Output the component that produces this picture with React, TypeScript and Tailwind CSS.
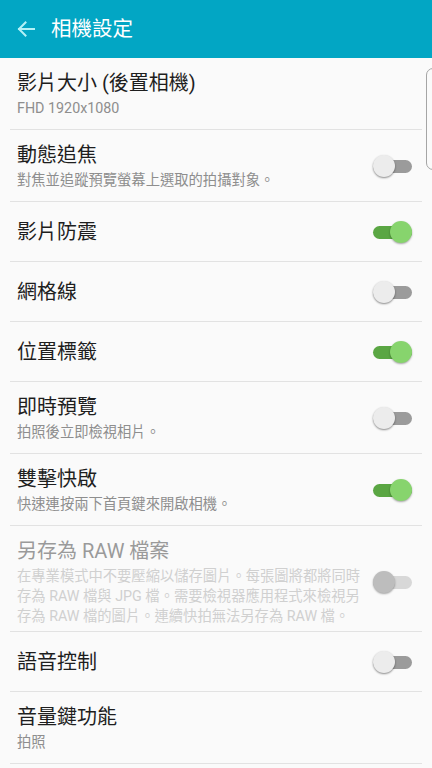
import React from "react";

type Mode = "off" | "on" | "disabled";

function Toggle({ mode }: { mode: Mode }) {
  const track =
    mode === "on" ? "bg-[#5aa643]" : mode === "off" ? "bg-[#9b9b9b]" : "bg-[#d8d8d8]";
  const thumb =
    mode === "on"
      ? "right-0 bg-[#87d46d] shadow-[0_1px_2px_rgba(0,0,0,0.35)]"
      : mode === "off"
      ? "left-0 bg-[#ececec] shadow-[0_1px_2px_rgba(0,0,0,0.45)]"
      : "left-0 bg-[#bdbdbd] shadow-[0_1px_2px_rgba(0,0,0,0.35)]";
  return (
    <div className="relative w-[39px] h-[22px] shrink-0">
      <div className={`absolute left-0 right-0 top-[5px] h-[13px] rounded-full ${track}`} />
      <div className={`absolute top-0 w-[22px] h-[22px] rounded-full ${thumb}`} />
    </div>
  );
}

type Item = {
  title: string;
  sub?: string[];
  toggle?: Mode;
  disabled?: boolean;
};

const items: Item[] = [
  { title: "影片大小 (後置相機)", sub: ["FHD 1920x1080"] },
  { title: "動態追焦", sub: ["對焦並追蹤預覽螢幕上選取的拍攝對象。"], toggle: "off" },
  { title: "影片防震", toggle: "on" },
  { title: "網格線", toggle: "off" },
  { title: "位置標籤", toggle: "on" },
  { title: "即時預覽", sub: ["拍照後立即檢視相片。"], toggle: "off" },
  { title: "雙擊快啟", sub: ["快速連按兩下首頁鍵來開啟相機。"], toggle: "on" },
  {
    title: "另存為 RAW 檔案",
    sub: [
      "在專業模式中不要壓縮以儲存圖片。每張圖將都將同時",
      "存為 RAW 檔與 JPG 檔。需要檢視器應用程式來檢視另",
      "存為 RAW 檔的圖片。連續快拍無法另存為 RAW 檔。",
    ],
    toggle: "disabled",
    disabled: true,
  },
  { title: "語音控制", toggle: "off" },
  { title: "音量鍵功能", sub: ["拍照"] },
];

function Row({ item }: { item: Item }) {
  const hasSub = !!item.sub;
  const raw = item.sub && item.sub.length > 1;
  return (
    <div>
      <div
        className={`flex items-center pl-[17px] pr-[20px] ${
          hasSub ? (raw ? "pt-[12px] pb-[5px]" : "pt-[12px] pb-[11px]") : "h-[59px]"
        }`}
      >
        <div className="flex-1 min-w-0">
          <div
            className={`text-[20px] leading-[26px] whitespace-nowrap ${
              item.disabled ? "text-[#9a9a9a]" : "text-[#1e1e1e]"
            }`}
          >
            {item.title}
          </div>
          {item.sub && (
            <div className="mt-[2px]">
              {item.sub.map((s, i) => (
                <div
                  key={i}
                  className={`text-[14.3px] leading-[20px] whitespace-nowrap ${
                    item.disabled ? "text-[#d0d0d0]" : "text-[#8e8e8e]"
                  }`}
                >
                  {s}
                </div>
              ))}
            </div>
          )}
        </div>
        {item.toggle && (
          <div className="ml-[2px]">
            <Toggle mode={item.toggle} />
          </div>
        )}
      </div>
      <div className="mx-[10px] h-px bg-[#e2e2e2]" />
    </div>
  );
}

export default function App() {
  return (
    <div
      className="relative w-[432px] h-[768px] overflow-hidden bg-[#fafafa]"
      style={{ fontFamily: 'Roboto, "Noto Sans CJK TC", "Noto Sans", sans-serif' }}
    >
      <div className="h-[58px] bg-[#02a6c4] flex items-center">
        <svg
          width="20"
          height="20"
          viewBox="0 0 20 20"
          className="ml-[16px]"
          fill="none"
          stroke="#b4f1f6"
          strokeWidth="2"
          strokeLinecap="square"
        >
          <path d="M18 10H3" />
          <path d="M9.5 3.5L3 10l6.5 6.5" />
        </svg>
        <div className="ml-[15px] text-[20.5px] leading-[26px] text-white">相機設定</div>
      </div>
      <div>
        {items.map((it, i) => (
          <Row key={i} item={it} />
        ))}
      </div>
      <div className="absolute left-[426px] top-[68px] w-[14px] h-[102px] rounded-[7px] border border-[#a5a5a5] bg-[#fafafa]" />
    </div>
  );
}
